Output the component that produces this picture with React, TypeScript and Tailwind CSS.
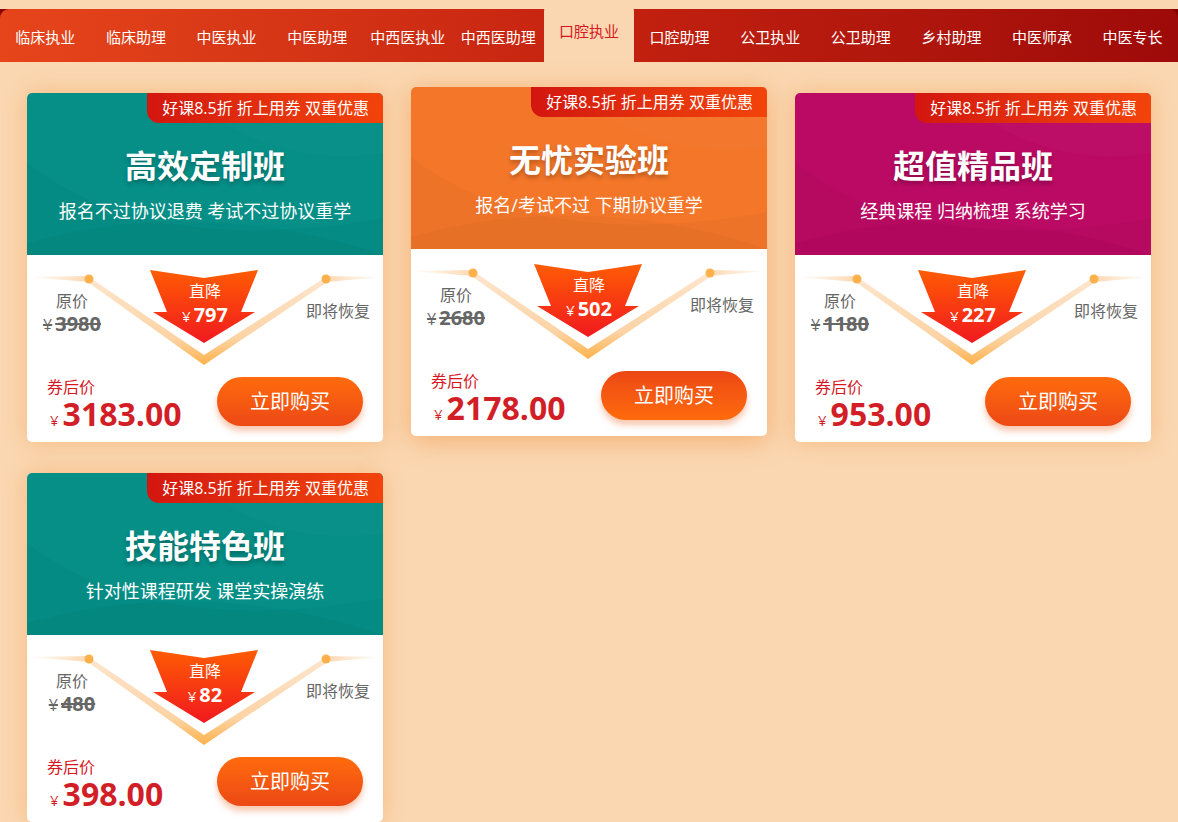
import React from 'react';

type Course = {
  title: string;
  subtitle: string;
  header: string;
  original: string;
  drop: string;
  price: string;
  hovered?: boolean;
};

const tabs = [
  '临床执业',
  '临床助理',
  '中医执业',
  '中医助理',
  '中西医执业',
  '中西医助理',
  '口腔执业',
  '口腔助理',
  '公卫执业',
  '公卫助理',
  '乡村助理',
  '中医师承',
  '中医专长',
];

const courses: Course[] = [
  {
    title: '高效定制班',
    subtitle: '报名不过协议退费 考试不过协议重学',
    header: 'bg-[#058f87]',
    original: '3980',
    drop: '797',
    price: '3183.00',
  },
  {
    title: '无忧实验班',
    subtitle: '报名/考试不过 下期协议重学',
    header: 'bg-[#f37629]',
    original: '2680',
    drop: '502',
    price: '2178.00',
    hovered: true,
  },
  {
    title: '超值精品班',
    subtitle: '经典课程 归纳梳理 系统学习',
    header: 'bg-[#bb0a63]',
    original: '1180',
    drop: '227',
    price: '953.00',
  },
  {
    title: '技能特色班',
    subtitle: '针对性课程研发 课堂实操演练',
    header: 'bg-[#058f87]',
    original: '480',
    drop: '82',
    price: '398.00',
  },
];

const Decoration = ({ id }: { id: string }) => (
  <svg className="absolute inset-0" width="356" height="122" viewBox="0 0 356 122">
    <defs>
      <linearGradient id={`band-${id}`} x1="0" y1="0" x2="0" y2="1">
        <stop offset="0" stopColor="#fde6cf" />
        <stop offset="0.7" stopColor="#fcd3a4" />
        <stop offset="1" stopColor="#fdb24a" />
      </linearGradient>
      <linearGradient id={`lineL-${id}`} x1="0" y1="0" x2="1" y2="0">
        <stop offset="0" stopColor="#fde9d6" stopOpacity="0.2" />
        <stop offset="1" stopColor="#fbd6ad" />
      </linearGradient>
      <linearGradient id={`lineR-${id}`} x1="1" y1="0" x2="0" y2="0">
        <stop offset="0" stopColor="#fde9d6" stopOpacity="0.2" />
        <stop offset="1" stopColor="#fbd6ad" />
      </linearGradient>
      <linearGradient id={`arrow-${id}`} x1="0" y1="0" x2="0" y2="1">
        <stop offset="0" stopColor="#ff5c04" />
        <stop offset="1" stopColor="#f1191f" />
      </linearGradient>
    </defs>
    <polygon points="0,22 62,21 62,27" fill={`url(#lineL-${id})`} />
    <polygon points="356,22 299,21 299,27" fill={`url(#lineR-${id})`} />
    <polygon points="62,22 177,100 299,22 299,28 177,110 62,28" fill={`url(#band-${id})`} />
    <circle cx="62" cy="24" r="4.5" fill="#fcb14c" />
    <circle cx="299" cy="24" r="4.5" fill="#fcb14c" />
    <polygon
      points="123,15 177,23 231,15 214,57 228,57 177,88 126,57 140,57"
      fill="#ffffff"
      stroke="#ffffff"
      strokeWidth="8"
      strokeLinejoin="round"
    />
    <polygon
      points="123,15 177,23 231,15 214,57 228,57 177,88 126,57 140,57"
      fill={`url(#arrow-${id})`}
    />
  </svg>
);

const CourseCard = ({ course, index }: { course: Course; index: number }) => (
  <div
    className={`w-[356px] overflow-hidden rounded-[5px] bg-white ${
      course.hovered
        ? '-translate-y-1.5 shadow-[0_4px_26px_rgba(242,140,60,0.55)]'
        : 'shadow-[0_0_22px_rgba(244,150,70,0.45)]'
    }`}
  >
    {/* Header */}
    <div className={`relative h-[162px] ${course.header}`}>
      <svg className="absolute inset-0" width="356" height="162" viewBox="0 0 356 162">
        <path d="M0 70 C 90 140, 220 150, 356 125 L356 162 L0 162 Z" fill="#000" opacity="0.025" />
        <path d="M0 150 C 120 115, 250 125, 356 162 L0 162 Z" fill="#000" opacity="0.025" />
        <path d="M160 0 C 220 60, 300 70, 356 60 L356 0 Z" fill="#fff" opacity="0.02" />
      </svg>
      <div className="absolute right-0 top-0 flex h-[30px] items-center rounded-bl-[12px] bg-linear-to-r from-[#d3150f] to-[#f3430b] pl-[15px] pr-[14px] text-[16px] text-white">
        好课8.5折 折上用券 双重优惠
      </div>
      <div className="relative flex flex-col items-center pt-[55px] text-white">
        <div className="text-[32px] font-bold leading-[36px] [text-shadow:0_3px_4px_rgba(0,0,0,0.25)]">
          {course.title}
        </div>
        <div className="mt-[15px] text-[18px] leading-[24px]">{course.subtitle}</div>
      </div>
    </div>

    {/* Price area */}
    <div className="relative h-[122px]">
      <Decoration id={`c${index}`} />
      <div className="relative flex h-full">
        <div className="flex w-[77px] flex-col items-center pl-[13px] pt-[35px] text-[#666]">
          <div className="text-[16px] leading-[22px]">原价</div>
          <div className="flex items-baseline leading-[24px] line-through decoration-[#666] decoration-2">
            <span className="pr-[3px] text-[16px]">¥</span>
            <span className="text-[20px] font-bold">{course.original}</span>
          </div>
        </div>
        <div className="flex flex-1 flex-col items-center pt-[25px] text-white">
          <div className="text-[16px] leading-[22px]">直降</div>
          <div className="mt-[1px] flex items-baseline leading-[24px]">
            <span className="mr-[3px] text-[15px]">¥</span>
            <span className="text-[20px] font-bold">{course.drop}</span>
          </div>
        </div>
        <div className="w-[77px] pr-[13px] pt-[45px] text-right text-[16px] leading-[22px] text-[#666]">
          即将恢复
        </div>
      </div>
    </div>

    <div className="flex h-[65px] items-start justify-between pl-[20px] pr-[20px]">
      <div className="flex flex-col">
        <div className="text-[16px] leading-[20px] text-[#d7171f]">券后价</div>
        <div className="flex items-baseline pl-[3px] leading-[34px] text-[#d21f27]">
          <span className="mr-[4px] text-[15px]">¥</span>
          <span className="text-[32px] font-bold">{course.price}</span>
        </div>
      </div>
      <button
        type="button"
        className={`h-[49px] w-[146px] rounded-full text-[20px] text-white shadow-[0_5px_6px_rgba(236,96,30,0.35)] ${
          course.hovered
            ? 'bg-linear-to-b from-[#ec4714] to-[#ff6b0c]'
            : 'bg-linear-to-b from-[#ff6b0c] to-[#ec4714]'
        }`}
      >
        立即购买
      </button>
    </div>
  </div>
);

export default function App() {
  return (
    <div className="min-h-[822px] overflow-hidden bg-[#fad7b1] font-['Open_Sans','Noto_Sans_CJK_SC',sans-serif]">
      {/* Nav */}
      <div className="bg-[#860000]">
        <nav className="mt-[9px] flex h-[53px] rounded-t-[9px] bg-linear-to-r from-[#e6451b] via-[#c52210] to-[#9e0a09]">
          {tabs.map((tab, i) =>
            i === 6 ? (
              <div
                key={tab}
                className="-mt-[9px] flex h-[62px] flex-1 items-start justify-center rounded-t-[12px] bg-[#fad7b1] pt-[20px] text-[15px] leading-[22px] text-[#d7171f]"
              >
                {tab}
              </div>
            ) : (
              <div
                key={tab}
                className="flex flex-1 items-center justify-center pt-[3px] text-[15px] text-white"
              >
                {tab}
              </div>
            ),
          )}
        </nav>
      </div>

      {/* Cards */}
      <div className="grid grid-cols-[repeat(3,356px)] gap-x-[28px] gap-y-[31px] pl-[27px] pt-[31px]">
        {courses.map((course, i) => (
          <CourseCard key={course.title} course={course} index={i} />
        ))}
      </div>
    </div>
  );
}
